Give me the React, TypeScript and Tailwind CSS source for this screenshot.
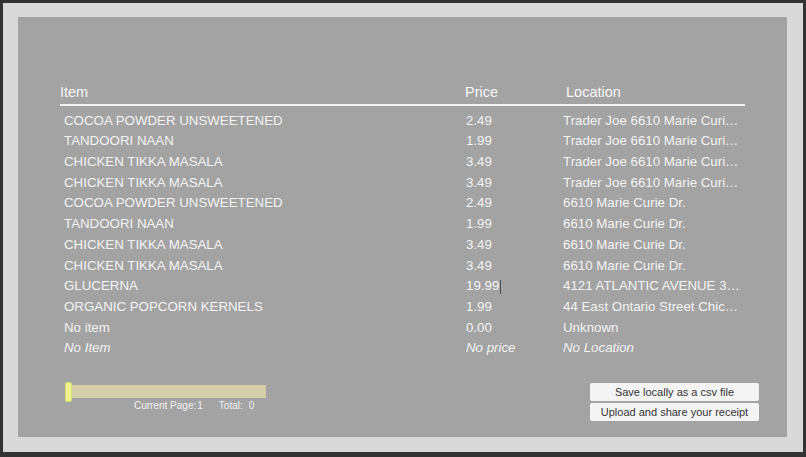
import React from 'react';

type Row = { item: string; price: string; location: string; italic?: boolean; cursor?: boolean };

const rows: Row[] = [
  { item: 'COCOA POWDER UNSWEETENED', price: '2.49', location: 'Trader Joe 6610 Marie Curi…' },
  { item: 'TANDOORI NAAN', price: '1.99', location: 'Trader Joe 6610 Marie Curi…' },
  { item: 'CHICKEN TIKKA MASALA', price: '3.49', location: 'Trader Joe 6610 Marie Curi…' },
  { item: 'CHICKEN TIKKA MASALA', price: '3.49', location: 'Trader Joe 6610 Marie Curi…' },
  { item: 'COCOA POWDER UNSWEETENED', price: '2.49', location: '6610 Marie Curie Dr.' },
  { item: 'TANDOORI NAAN', price: '1.99', location: '6610 Marie Curie Dr.' },
  { item: 'CHICKEN TIKKA MASALA', price: '3.49', location: '6610 Marie Curie Dr.' },
  { item: 'CHICKEN TIKKA MASALA', price: '3.49', location: '6610 Marie Curie Dr.' },
  { item: 'GLUCERNA', price: '19.99', location: '4121 ATLANTIC AVENUE 3…', cursor: true },
  { item: 'ORGANIC POPCORN KERNELS', price: '1.99', location: '44 East Ontario Street Chic…' },
  { item: 'No item', price: '0.00', location: 'Unknown' },
  { item: 'No Item', price: 'No price', location: 'No Location', italic: true },
];

export default function App() {
  return (
    <div
      className="w-[806px] h-[457px] bg-[#333333] pt-[3px] pl-[3px] pr-[3px] pb-[5px]"
      style={{ fontFamily: '"Liberation Sans", Arial, sans-serif' }}
    >
      {/* light frame */}
      <div className="w-full h-full bg-[#d9d9d9] pl-[15px] pr-[13px] pt-[14px] pb-[15px]">
        {/* content panel */}
        <div className="w-[769px] h-[420px] bg-[#a3a3a3] pt-[65px]">
          {/* table */}
          <div className="ml-[42px] w-[685px]">
            <div className="grid grid-cols-[405px_101px_1fr] border-b-2 border-[#f2f2f2] pb-[2px] text-[14.5px] leading-[20px] text-[#f7f7f7]">
              <span>Item</span>
              <span>Price</span>
              <span>Location</span>
            </div>
            <div className="mt-[4.5px] pl-[4px]">
              {rows.map((r, i) => (
                <div
                  key={i}
                  className={`grid grid-cols-[402px_97px_182px] h-[20.73px] leading-[20.73px] text-[13.3px] text-[#f3f3f3] whitespace-nowrap ${r.italic ? 'italic' : ''}`}
                >
                  <span>{r.item}</span>
                  <span className="flex items-center">
                    {r.price}
                    {r.cursor && <span className="inline-block w-px h-[14px] bg-[#4a4a4a] ml-px" />}
                  </span>
                  <span>{r.location}</span>
                </div>
              ))}
            </div>
          </div>

          {/* bottom controls */}
          <div className="flex justify-between items-start mt-[22.5px] pl-[47px] pr-[28px]">
            <div className="w-[201px]">
              <div className="relative h-[20px]">
                <div className="absolute left-[7px] right-0 top-[3px] h-[13px] bg-[#d6cda9]" />
                <div className="absolute left-0 top-0 w-[7px] h-[20px] rounded-[2px] bg-[#eef38c] border border-[#d9de74]" />
              </div>
              <div className="flex mt-[-2px] ml-[69px] text-[10px] leading-[12px] text-[#f2f2f2]">
                <span>Current Page:</span>
                <span className="ml-[1px]">1</span>
                <span className="ml-[16px]">Total:</span>
                <span className="ml-[6px]">0</span>
              </div>
            </div>
            <div className="flex flex-col gap-[2px] mt-[1px]">
              <button className="w-[169px] h-[18px] bg-[#f4f4f4] text-[11px] leading-[18px] text-[#333] rounded-[2px]">
                Save locally as a csv file
              </button>
              <button className="w-[169px] h-[18px] bg-[#f4f4f4] text-[11px] leading-[18px] text-[#333] rounded-[2px]">
                Upload and share your receipt
              </button>
            </div>
          </div>
        </div>
      </div>
    </div>
  );
}
